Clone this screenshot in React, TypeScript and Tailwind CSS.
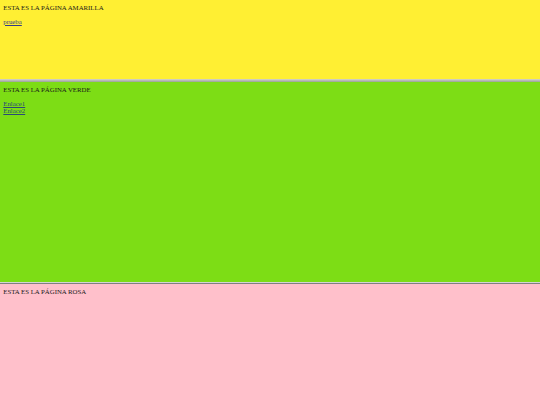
export default function App() {
  return (
    <div className="flex h-[405px] w-[540px] flex-col overflow-hidden font-['Liberation_Serif',serif] text-[6.8px] leading-[1.12] text-[#1a1a1a]">
      <section className="h-[79px] shrink-0 bg-[#ffef33] px-[3.3px] pt-[3.5px]">
        <div>ESTA ES LA PÁGINA AMARILLA</div>
        <p className="mt-[6.6px]">
          <a href="#" className="text-[#343c86] underline">prueba</a>
        </p>
      </section>
      <div className="h-[3px] shrink-0 bg-gradient-to-b from-[#d8d6c4] via-[#b9b9b9] to-[#9aa792]" />
      <section className="h-[200px] shrink-0 bg-[#7ddd15] px-[3.3px] pt-[3.5px]">
        <div>ESTA ES LA PÁGINA VERDE</div>
        <p className="mt-[6.6px] flex flex-col items-start">
          <a href="#" className="text-[#2a4a78] underline">Enlace1</a>
          <a href="#" className="text-[#2a4a78] underline">Enlace2</a>
        </p>
      </section>
      <div className="flex h-[2px] shrink-0 flex-col">
        <div className="h-px bg-[#d4d4d4]" />
        <div className="h-px bg-[#808080]" />
      </div>
      <section className="flex-1 bg-[#ffc0cb] px-[3.3px] pt-[3.5px]">
        <div>ESTA ES LA PÁGINA ROSA</div>
      </section>
    </div>
  );
}
